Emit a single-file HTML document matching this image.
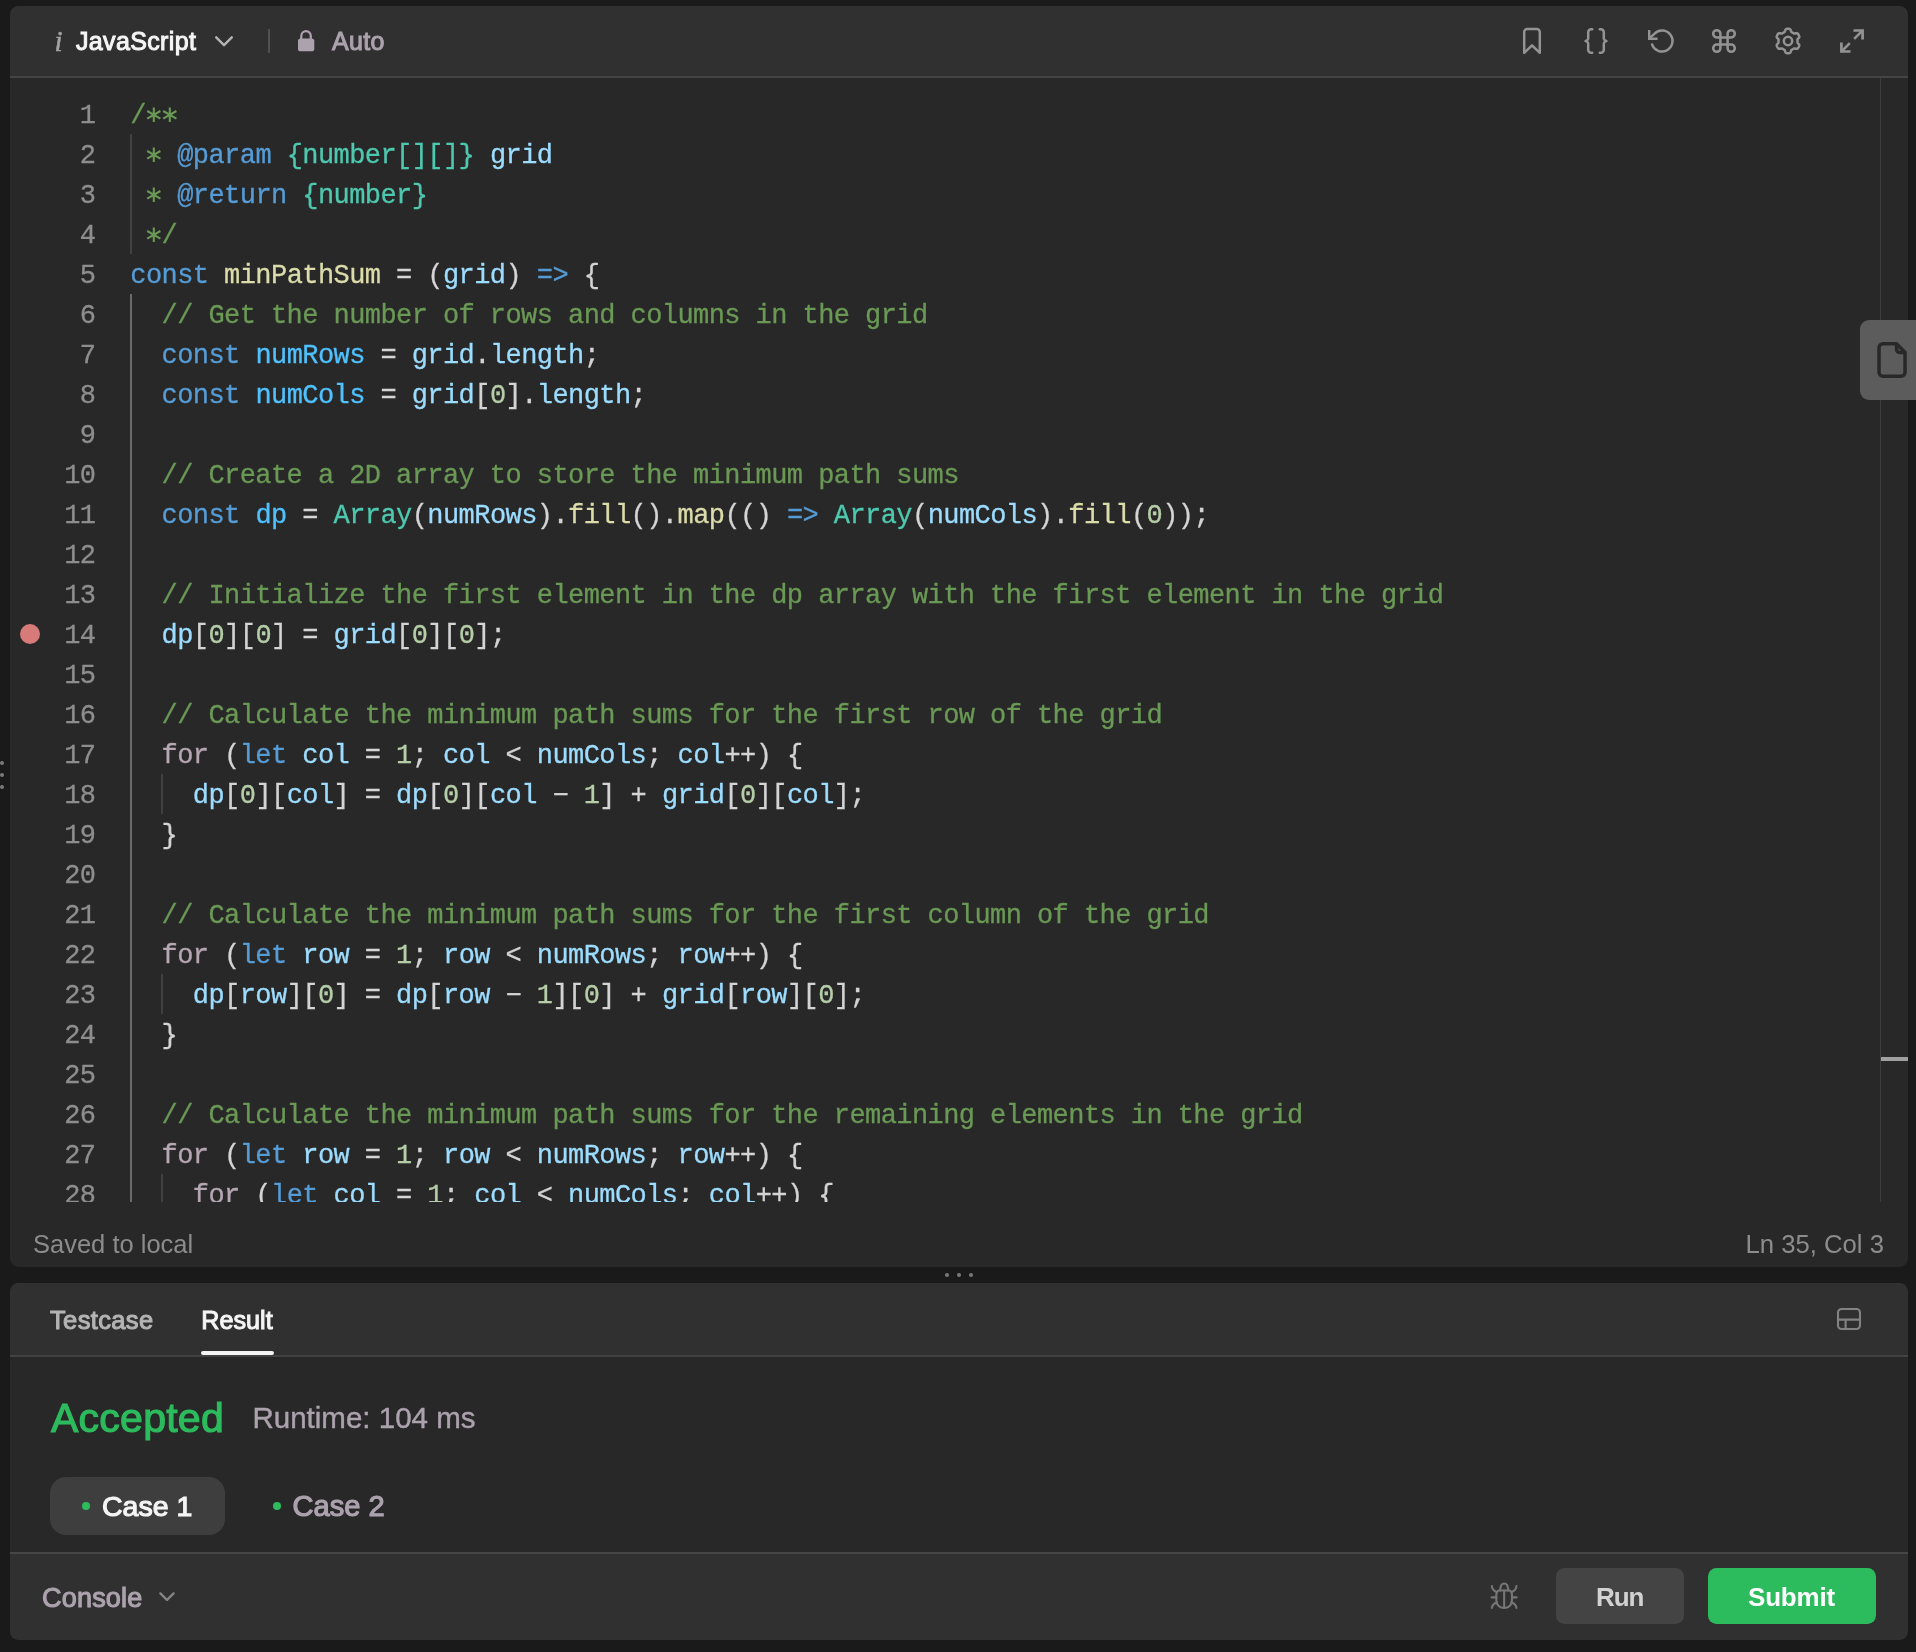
<!DOCTYPE html>
<html>
<head>
<meta charset="utf-8">
<title>Editor</title>
<style>
*{box-sizing:border-box;margin:0;padding:0}
html,body{width:1916px;height:1652px;overflow:hidden;background:#1a1a1a;font-family:"Liberation Sans",sans-serif;}
body{position:relative}
.abs{position:absolute}
/* ---------- editor panel ---------- */
#editor{position:absolute;left:10px;top:6px;width:1898px;height:1261px;background:#282828;border-radius:8.5px;overflow:hidden}
#toolbar{position:absolute;left:0;top:0;width:100%;height:72px;background:#303030;border-bottom:2px solid #444444}
.t{position:absolute;white-space:pre;line-height:1}
#editor,#bottom{will-change:transform}
.med{-webkit-text-stroke:0.04em currentColor}
/* code */
#code{position:absolute;left:0;top:71px;width:1898px;height:1125px;overflow:hidden}
.ln,.cl{position:absolute;margin-top:2px;height:40px;line-height:40px;font-family:"Liberation Mono",monospace;font-size:27px;letter-spacing:-0.57px;white-space:pre;-webkit-text-stroke:0.3px currentColor}
.ln{left:0;width:85.5px;text-align:right;color:#8e8e8e}
.cl{left:120.3px;color:#d4d4d4}
.c{color:#6a9955}.k{color:#569cd6}.v{color:#9cdcfe}.f{color:#dcdcaa}.ty{color:#4ec9b0}.n{color:#b5cea8}.cn{color:#4fc1ff}.fl{color:#b5a7b3}
.as{vertical-align:top;display:inline-block}
.g{position:absolute;width:2px;background:#404040}
/* ---------- bottom panel ---------- */
#bottom{position:absolute;left:10px;top:1283px;width:1898px;height:357px;background:#282828;border-radius:8.5px;overflow:hidden}
#bhead{position:absolute;left:0;top:0;width:100%;height:74px;background:#303030;border-bottom:2px solid #424242}
#bfoot{position:absolute;left:0;top:270px;width:100%;height:87px;background:#303030}
#bfline{position:absolute;left:0;top:269px;width:100%;height:2px;background:#464646}
</style>
</head>
<body>
<!-- resize handle dots -->
<div class="abs" style="left:0;top:761px;width:4px;height:4px;border-radius:2px;background:#7a7a7a"></div>
<div class="abs" style="left:0;top:773px;width:4px;height:4px;border-radius:2px;background:#7a7a7a"></div>
<div class="abs" style="left:0;top:785px;width:4px;height:4px;border-radius:2px;background:#7a7a7a"></div>
<div class="abs" style="left:945px;top:1273px;width:4px;height:4px;border-radius:2px;background:#7a7a7a"></div>
<div class="abs" style="left:957px;top:1273px;width:4px;height:4px;border-radius:2px;background:#7a7a7a"></div>
<div class="abs" style="left:969px;top:1273px;width:4px;height:4px;border-radius:2px;background:#7a7a7a"></div>

<div id="editor">
  <div id="toolbar">
        <span class="t" id="t-i" style="left:44.5px;top:20.5px;font-family:'Liberation Serif',serif;font-style:italic;font-size:29px;-webkit-text-stroke:0.5px #a3a3a3;color:#a3a3a3">i</span>
    <span class="t med" id="t-js" style="left:66px;top:23px;font-size:25px;letter-spacing:0.35px;color:#f5f5f5">JavaScript</span>
    <svg class="abs" style="left:204px;top:29px" width="20" height="13" viewBox="0 0 20 13"><path d="M2.2 2.3 L10 10.2 L17.8 2.3" fill="none" stroke="#b4b4b4" stroke-width="2.4" stroke-linecap="round" stroke-linejoin="round"/></svg>
    <div class="abs" style="left:258px;top:23px;width:2px;height:24px;background:#505050"></div>
    <!-- lock -->
    <svg class="abs" style="left:286px;top:24px" width="20" height="23" viewBox="0 0 20 23"><path d="M5.3 9.5 V5.95 a4.75 4.75 0 0 1 9.5 0 V9.5" fill="none" stroke="#aca2ae" stroke-width="2.2"/><rect x="2" y="8.5" width="16.3" height="12.8" rx="2.6" fill="#aca2ae"/></svg>
    <span class="t med" id="t-auto" style="left:322px;top:23px;font-size:25px;letter-spacing:0.3px;color:#aca2ae">Auto</span>
    <!-- right icons: abs centres 1532,1596,1660,1724,1788,1852 ; y centre 41 -->
    <svg class="abs" id="ic-bm" style="left:1511px;top:21px" width="22" height="28" viewBox="0 0 22 28"><path d="M3.2 5 a3 3 0 0 1 3-3 h9.6 a3 3 0 0 1 3 3 V25.8 L11 18.4 L3.2 25.8 Z" fill="none" stroke="#939393" stroke-width="2.5" stroke-linejoin="round"/></svg>
    <svg class="abs" id="ic-br" style="left:1573px;top:21px" width="26" height="28" viewBox="0 0 26 28"><g fill="none" stroke="#939393" stroke-width="2.5" stroke-linecap="round" stroke-linejoin="round"><path d="M9.2 2.3 H8.2 a3 3 0 0 0 -3 3 V10.6 a3 3 0 0 1 -2.6 3.4 a3 3 0 0 1 2.6 3.4 V22.7 a3 3 0 0 0 3 3 H9.2"/><path d="M16.8 2.3 H17.8 a3 3 0 0 1 3 3 V10.6 a3 3 0 0 0 2.6 3.4 a3 3 0 0 0 -2.6 3.4 V22.7 a3 3 0 0 1 -3 3 H16.8"/></g></svg>
    <svg class="abs" id="ic-rs" style="left:1637.7px;top:21px" width="28" height="28" viewBox="0 0 28 28"><g transform="translate(14 14) scale(1.167) translate(-12 -12)" fill="none" stroke="#939393" stroke-width="2.14" stroke-linejoin="miter"><path d="M1 2.6 V10 H8.2"/><path d="M3.51 15a9 9 0 1 0 2.13-9.36L1.6 9.4" stroke-linecap="round"/></g></svg>
    <svg class="abs" id="ic-cm" style="left:1700px;top:21px" width="28" height="28" viewBox="0 0 28 28"><g transform="translate(14 14) scale(1.2) translate(-12 -12)"><path d="M18 3a3 3 0 0 0-3 3v12a3 3 0 0 0 3 3 3 3 0 0 0 3-3 3 3 0 0 0-3-3H6a3 3 0 0 0-3 3 3 3 0 0 0 3 3 3 3 0 0 0 3-3V6a3 3 0 0 0-3-3 3 3 0 0 0-3 3 3 3 0 0 0 3 3h12a3 3 0 0 0 3-3 3 3 0 0 0-3-3z" fill="none" stroke="#939393" stroke-width="2.1" stroke-linejoin="round"/></g></svg>
    <svg class="abs" id="ic-gr" style="left:1763px;top:20.2px" width="30" height="30" viewBox="0 0 30 30"><g fill="none" stroke="#939393" stroke-width="2.5" stroke-linejoin="round"><circle cx="15" cy="15" r="4.2"/><path d="M24.50 15.00 L24.50 15.25 L24.49 15.50 L24.49 15.75 L24.49 16.00 L24.49 16.25 L24.53 16.51 L24.62 16.78 L24.80 17.08 L25.10 17.43 L25.50 17.81 L25.89 18.23 L26.16 18.63 L26.28 19.00 L26.30 19.34 L26.25 19.66 L26.16 19.97 L26.04 20.27 L25.91 20.56 L25.76 20.84 L25.61 21.12 L25.44 21.40 L25.27 21.67 L25.08 21.93 L24.88 22.18 L24.66 22.41 L24.40 22.62 L24.10 22.77 L23.72 22.85 L23.24 22.82 L22.69 22.69 L22.15 22.54 L21.70 22.44 L21.35 22.44 L21.07 22.50 L20.83 22.60 L20.61 22.72 L20.39 22.84 L20.18 22.97 L19.96 23.10 L19.75 23.23 L19.53 23.35 L19.32 23.47 L19.10 23.59 L18.88 23.71 L18.66 23.85 L18.46 24.01 L18.27 24.22 L18.10 24.53 L17.95 24.96 L17.81 25.50 L17.65 26.05 L17.44 26.48 L17.18 26.77 L16.89 26.95 L16.59 27.07 L16.28 27.14 L15.96 27.19 L15.64 27.23 L15.32 27.24 L15.00 27.25 L14.68 27.24 L14.36 27.23 L14.04 27.19 L13.72 27.14 L13.41 27.07 L13.11 26.95 L12.82 26.77 L12.56 26.48 L12.35 26.05 L12.19 25.50 L12.05 24.96 L11.90 24.53 L11.73 24.22 L11.54 24.01 L11.34 23.85 L11.12 23.71 L10.90 23.59 L10.68 23.47 L10.47 23.35 L10.25 23.23 L10.04 23.10 L9.82 22.97 L9.61 22.84 L9.39 22.72 L9.17 22.60 L8.93 22.50 L8.65 22.44 L8.30 22.44 L7.85 22.54 L7.31 22.69 L6.76 22.82 L6.28 22.85 L5.90 22.77 L5.60 22.62 L5.34 22.41 L5.12 22.18 L4.92 21.93 L4.73 21.67 L4.56 21.40 L4.39 21.12 L4.24 20.84 L4.09 20.56 L3.96 20.27 L3.84 19.97 L3.75 19.66 L3.70 19.34 L3.72 19.00 L3.84 18.63 L4.11 18.23 L4.50 17.81 L4.90 17.43 L5.20 17.08 L5.38 16.78 L5.47 16.51 L5.51 16.25 L5.51 16.00 L5.51 15.75 L5.51 15.50 L5.50 15.25 L5.50 15.00 L5.50 14.75 L5.51 14.50 L5.51 14.25 L5.51 14.00 L5.51 13.75 L5.47 13.49 L5.38 13.22 L5.20 12.92 L4.90 12.57 L4.50 12.19 L4.11 11.77 L3.84 11.37 L3.72 11.00 L3.70 10.66 L3.75 10.34 L3.84 10.03 L3.96 9.73 L4.09 9.44 L4.24 9.16 L4.39 8.88 L4.56 8.60 L4.73 8.33 L4.92 8.07 L5.12 7.82 L5.34 7.59 L5.60 7.38 L5.90 7.23 L6.28 7.15 L6.76 7.18 L7.31 7.31 L7.85 7.46 L8.30 7.56 L8.65 7.56 L8.93 7.50 L9.17 7.40 L9.39 7.28 L9.61 7.16 L9.82 7.03 L10.04 6.90 L10.25 6.77 L10.47 6.65 L10.68 6.53 L10.90 6.41 L11.12 6.29 L11.34 6.15 L11.54 5.99 L11.73 5.78 L11.90 5.47 L12.05 5.04 L12.19 4.50 L12.35 3.95 L12.56 3.52 L12.82 3.23 L13.11 3.05 L13.41 2.93 L13.72 2.86 L14.04 2.81 L14.36 2.77 L14.68 2.76 L15.00 2.75 L15.32 2.76 L15.64 2.77 L15.96 2.81 L16.28 2.86 L16.59 2.93 L16.89 3.05 L17.18 3.23 L17.44 3.52 L17.65 3.95 L17.81 4.50 L17.95 5.04 L18.10 5.47 L18.27 5.78 L18.46 5.99 L18.66 6.15 L18.88 6.29 L19.10 6.41 L19.32 6.53 L19.53 6.65 L19.75 6.77 L19.96 6.90 L20.18 7.03 L20.39 7.16 L20.61 7.28 L20.83 7.40 L21.07 7.50 L21.35 7.56 L21.70 7.56 L22.15 7.46 L22.69 7.31 L23.24 7.18 L23.72 7.15 L24.10 7.23 L24.40 7.38 L24.66 7.59 L24.88 7.82 L25.08 8.07 L25.27 8.33 L25.44 8.60 L25.61 8.88 L25.76 9.16 L25.91 9.44 L26.04 9.73 L26.16 10.03 L26.25 10.34 L26.30 10.66 L26.28 11.00 L26.16 11.37 L25.89 11.77 L25.50 12.19 L25.10 12.57 L24.80 12.92 L24.62 13.22 L24.53 13.49 L24.49 13.75 L24.49 14.00 L24.49 14.25 L24.49 14.50 L24.50 14.75 Z"/></g></svg>
    <svg class="abs" id="ic-ex" style="left:1828px;top:21px" width="28" height="28" viewBox="0 0 28 28"><g fill="none" stroke="#939393" stroke-width="2.7" stroke-linejoin="miter"><path d="M15.5 3.5 H24.6 V12.6"/><path d="M24.2 3.9 L16.2 11.9"/><path d="M12.5 24.5 H3.4 V15.4"/><path d="M3.8 24.1 L11.8 16.1"/></g></svg>

  </div>
  <div id="code">
    <div class="ln" style="top:17px">1</div><div class="cl" style="top:17px"><span class="c">/</span><svg class="as" width="15.65" height="40" viewBox="0 0 15.65 40"><path d="M7.8 11.6 V26 M1.2 15 L14.4 22.6 M14.4 15 L1.2 22.6" fill="none" stroke="#6a9955" stroke-width="2.1"/></svg><svg class="as" width="15.65" height="40" viewBox="0 0 15.65 40"><path d="M7.8 11.6 V26 M1.2 15 L14.4 22.6 M14.4 15 L1.2 22.6" fill="none" stroke="#6a9955" stroke-width="2.1"/></svg></div>
<div class="ln" style="top:57px">2</div><div class="cl" style="top:57px"><span class="c"> </span><svg class="as" width="15.65" height="40" viewBox="0 0 15.65 40"><path d="M7.8 11.6 V26 M1.2 15 L14.4 22.6 M14.4 15 L1.2 22.6" fill="none" stroke="#6a9955" stroke-width="2.1"/></svg><span class="c"> </span><span class="k">@param</span> <span class="ty">{number[][]}</span> <span class="v">grid</span></div>
<div class="ln" style="top:97px">3</div><div class="cl" style="top:97px"><span class="c"> </span><svg class="as" width="15.65" height="40" viewBox="0 0 15.65 40"><path d="M7.8 11.6 V26 M1.2 15 L14.4 22.6 M14.4 15 L1.2 22.6" fill="none" stroke="#6a9955" stroke-width="2.1"/></svg><span class="c"> </span><span class="k">@return</span> <span class="ty">{number}</span></div>
<div class="ln" style="top:137px">4</div><div class="cl" style="top:137px"><span class="c"> </span><svg class="as" width="15.65" height="40" viewBox="0 0 15.65 40"><path d="M7.8 11.6 V26 M1.2 15 L14.4 22.6 M14.4 15 L1.2 22.6" fill="none" stroke="#6a9955" stroke-width="2.1"/></svg><span class="c">/</span></div>
<div class="ln" style="top:177px">5</div><div class="cl" style="top:177px"><span class="k">const</span> <span class="f">minPathSum</span> = (<span class="v">grid</span>) <span class="k">=&gt;</span> {</div>
<div class="ln" style="top:217px">6</div><div class="cl" style="top:217px">  <span class="c">// Get the number of rows and columns in the grid</span></div>
<div class="ln" style="top:257px">7</div><div class="cl" style="top:257px">  <span class="k">const</span> <span class="cn">numRows</span> = <span class="v">grid</span>.<span class="v">length</span>;</div>
<div class="ln" style="top:297px">8</div><div class="cl" style="top:297px">  <span class="k">const</span> <span class="cn">numCols</span> = <span class="v">grid</span>[<span class="n">0</span>].<span class="v">length</span>;</div>
<div class="ln" style="top:337px">9</div><div class="cl" style="top:337px"></div>
<div class="ln" style="top:377px">10</div><div class="cl" style="top:377px">  <span class="c">// Create a 2D array to store the minimum path sums</span></div>
<div class="ln" style="top:417px">11</div><div class="cl" style="top:417px">  <span class="k">const</span> <span class="cn">dp</span> = <span class="ty">Array</span>(<span class="v">numRows</span>).<span class="f">fill</span>().<span class="f">map</span>(() <span class="k">=&gt;</span> <span class="ty">Array</span>(<span class="v">numCols</span>).<span class="f">fill</span>(<span class="n">0</span>));</div>
<div class="ln" style="top:457px">12</div><div class="cl" style="top:457px"></div>
<div class="ln" style="top:497px">13</div><div class="cl" style="top:497px">  <span class="c">// Initialize the first element in the dp array with the first element in the grid</span></div>
<div class="ln" style="top:537px">14</div><div class="cl" style="top:537px">  <span class="v">dp</span>[<span class="n">0</span>][<span class="n">0</span>] = <span class="v">grid</span>[<span class="n">0</span>][<span class="n">0</span>];</div>
<div class="ln" style="top:577px">15</div><div class="cl" style="top:577px"></div>
<div class="ln" style="top:617px">16</div><div class="cl" style="top:617px">  <span class="c">// Calculate the minimum path sums for the first row of the grid</span></div>
<div class="ln" style="top:657px">17</div><div class="cl" style="top:657px">  <span class="fl">for</span> (<span class="k">let</span> <span class="v">col</span> = <span class="n">1</span>; <span class="v">col</span> &lt; <span class="v">numCols</span>; <span class="v">col</span>++) {</div>
<div class="ln" style="top:697px">18</div><div class="cl" style="top:697px">    <span class="v">dp</span>[<span class="n">0</span>][<span class="v">col</span>] = <span class="v">dp</span>[<span class="n">0</span>][<span class="v">col</span> &minus; <span class="n">1</span>] + <span class="v">grid</span>[<span class="n">0</span>][<span class="v">col</span>];</div>
<div class="ln" style="top:737px">19</div><div class="cl" style="top:737px">  }</div>
<div class="ln" style="top:777px">20</div><div class="cl" style="top:777px"></div>
<div class="ln" style="top:817px">21</div><div class="cl" style="top:817px">  <span class="c">// Calculate the minimum path sums for the first column of the grid</span></div>
<div class="ln" style="top:857px">22</div><div class="cl" style="top:857px">  <span class="fl">for</span> (<span class="k">let</span> <span class="v">row</span> = <span class="n">1</span>; <span class="v">row</span> &lt; <span class="v">numRows</span>; <span class="v">row</span>++) {</div>
<div class="ln" style="top:897px">23</div><div class="cl" style="top:897px">    <span class="v">dp</span>[<span class="v">row</span>][<span class="n">0</span>] = <span class="v">dp</span>[<span class="v">row</span> &minus; <span class="n">1</span>][<span class="n">0</span>] + <span class="v">grid</span>[<span class="v">row</span>][<span class="n">0</span>];</div>
<div class="ln" style="top:937px">24</div><div class="cl" style="top:937px">  }</div>
<div class="ln" style="top:977px">25</div><div class="cl" style="top:977px"></div>
<div class="ln" style="top:1017px">26</div><div class="cl" style="top:1017px">  <span class="c">// Calculate the minimum path sums for the remaining elements in the grid</span></div>
<div class="ln" style="top:1057px">27</div><div class="cl" style="top:1057px">  <span class="fl">for</span> (<span class="k">let</span> <span class="v">row</span> = <span class="n">1</span>; <span class="v">row</span> &lt; <span class="v">numRows</span>; <span class="v">row</span>++) {</div>
<div class="ln" style="top:1097px">28</div><div class="cl" style="top:1097px">    <span class="fl">for</span> (<span class="k">let</span> <span class="v">col</span> = <span class="n">1</span>; <span class="v">col</span> &lt; <span class="v">numCols</span>; <span class="v">col</span>++) {</div>    <!-- indent guides (coords relative to #code: abs y - 77, abs x - 10) -->
    <div class="g" style="left:120px;top:57px;height:120px;background:#424242"></div>
    <div class="g" style="left:120px;top:217px;height:920px;background:#6b6b6b"></div>
    <div class="g" style="left:151px;top:697px;height:40px"></div>
    <div class="g" style="left:151px;top:897px;height:40px"></div>
    <div class="g" style="left:151px;top:1097px;height:40px"></div>
    <!-- breakpoint -->
    <div class="abs" style="left:10px;top:547px;width:20px;height:20px;border-radius:10px;background:#d67b79"></div>
    <!-- overview ruler -->
    <div class="abs" style="left:1870px;top:1px;width:1px;height:1124px;background:#3e3e3e"></div>
    <div class="abs" style="left:1871px;top:980px;width:27px;height:4px;background:#a0a0a0"></div>

  </div>
    <!-- status bar (coords relative to #editor: abs x-10, abs y-6) -->
  <span class="t" id="t-saved" style="left:23px;top:1226px;font-size:25.5px;color:#8c8c8c">Saved to local</span>
  <span class="t" id="t-ln" style="right:24px;top:1226px;font-size:25.7px;color:#8c8c8c">Ln 35, Col 3</span>

</div>

<!-- side tab -->
<div class="abs" style="left:1860px;top:320px;width:66px;height:80px;border-radius:9px;background:#5c5c5c"></div>
<svg class="abs" id="ic-file" style="left:1875px;top:340px" width="34" height="40" viewBox="0 0 34 40"><g fill="none" stroke="#282828" stroke-width="3.5" stroke-linejoin="round"><path d="M8 3.85 H21.5 L30.05 12.4 V32.2 a4 4 0 0 1 -4 4 H8 a4 4 0 0 1 -4 -4 V7.85 a4 4 0 0 1 4 -4 Z"/><path d="M21.5 3.85 V9.4 a3 3 0 0 0 3 3 H30.05"/></g></svg>

<div id="bottom">
  <div id="bhead">
        <span class="t med" id="t-tc" style="left:40px;top:25px;font-size:25.5px;letter-spacing:0.35px;color:#b4b4b4">Testcase</span>
    <span class="t med" id="t-res" style="left:191.3px;top:25px;font-size:25.2px;color:#f5f5f5">Result</span>
    <div class="abs" style="left:191px;top:68px;width:73px;height:4px;border-radius:2px;background:#f5f5f5"></div>
    <svg class="abs" id="ic-lay" style="left:1826px;top:24px" width="26" height="24" viewBox="0 0 26 24"><g fill="none" stroke="#828282" stroke-width="2.1"><rect x="2" y="2" width="22" height="20" rx="3.5"/><path d="M2 12.6 H24"/><path d="M9.6 12.6 V22"/></g></svg>

  </div>
    <!-- coords relative to #bottom: abs x-10, abs y-1283 -->
  <span class="t med" id="t-acc" style="left:41px;top:115px;font-size:41px;letter-spacing:0.25px;-webkit-text-stroke:1.15px #2cbb5d;color:#2cbb5d">Accepted</span>
  <span class="t" id="t-rt" style="left:242.5px;top:120px;font-size:29.5px;-webkit-text-stroke:0.4px #aca2ae;color:#aca2ae">Runtime: 104 ms</span>
  <div class="abs" style="left:40px;top:194px;width:175px;height:58px;border-radius:16px;background:#3e3e3e"></div>
  <div class="abs" style="left:71.5px;top:219px;width:8.4px;height:8.4px;border-radius:5px;background:#2cbb5d"></div>
  <span class="t med" id="t-c1" style="left:92px;top:209px;font-size:28.5px;color:#f5f5f5">Case 1</span>
  <div class="abs" style="left:262.5px;top:219px;width:8.4px;height:8.4px;border-radius:5px;background:#2cbb5d"></div>
  <span class="t med" id="t-c2" style="left:282.5px;top:209px;font-size:29.1px;color:#aca2ae">Case 2</span>

  <div id="bfoot">
        <!-- coords relative to #bfoot: abs x-10, abs y-1552 -->
    <span class="t med" id="t-con" style="left:32px;top:31.7px;font-size:27px;letter-spacing:0.2px;color:#aca2ae">Console</span>
    <svg class="abs" style="left:148px;top:37.8px" width="18" height="12" viewBox="0 0 18 12"><path d="M2.4 2.4 L9 9 L15.6 2.4" fill="none" stroke="#858585" stroke-width="2.4" stroke-linecap="round" stroke-linejoin="round"/></svg>
    <svg class="abs" id="ic-bug" style="left:1479px;top:28px" width="31" height="31" viewBox="0 0 31 31"><g fill="none" stroke="#767676" stroke-width="2.1" stroke-linecap="round" stroke-linejoin="round"><path d="M10.4 9.45 H19.9 C21.9 9.45 22.95 11.5 22.95 14 V19.5 C22.95 24 19.5 27.05 15.15 27.05 C10.8 27.05 7.35 24 7.35 19.5 V14 C7.35 11.5 8.4 9.45 10.4 9.45 Z"/><path d="M11.15 9.45 C11.15 5 12.8 2.55 15.15 2.55 C17.5 2.55 19.15 5 19.15 9.45"/><path d="M15.15 9.45 V27"/><path d="M2.7 16.4 H7.3 M23 16.4 H27.6"/><path d="M2.85 5 C2.9 7.5 4.3 9.6 7.6 10.9 M27.45 5 C27.4 7.5 26 9.6 22.7 10.9"/><path d="M7.9 21.3 C4.6 22.8 2.9 24.7 2.85 27.05 M22.4 21.3 C25.7 22.8 27.4 24.7 27.45 27.05"/></g></svg>
    <div class="abs" style="left:1546px;top:15px;width:128px;height:56px;border-radius:8.5px;background:#444444"></div>
    <span class="t" id="t-run" style="left:1586px;top:30.5px;font-size:26px;letter-spacing:-1.1px;font-weight:bold;color:#d2d2d2">Run</span>
    <div class="abs" style="left:1698px;top:15px;width:168px;height:56px;border-radius:8.5px;background:#2cbb5d"></div>
    <span class="t" id="t-sub" style="left:1738px;top:30.5px;font-size:26px;letter-spacing:-0.2px;font-weight:bold;color:#ffffff">Submit</span>

  </div>
  <div id="bfline"></div>
</div>
</body>
</html>
